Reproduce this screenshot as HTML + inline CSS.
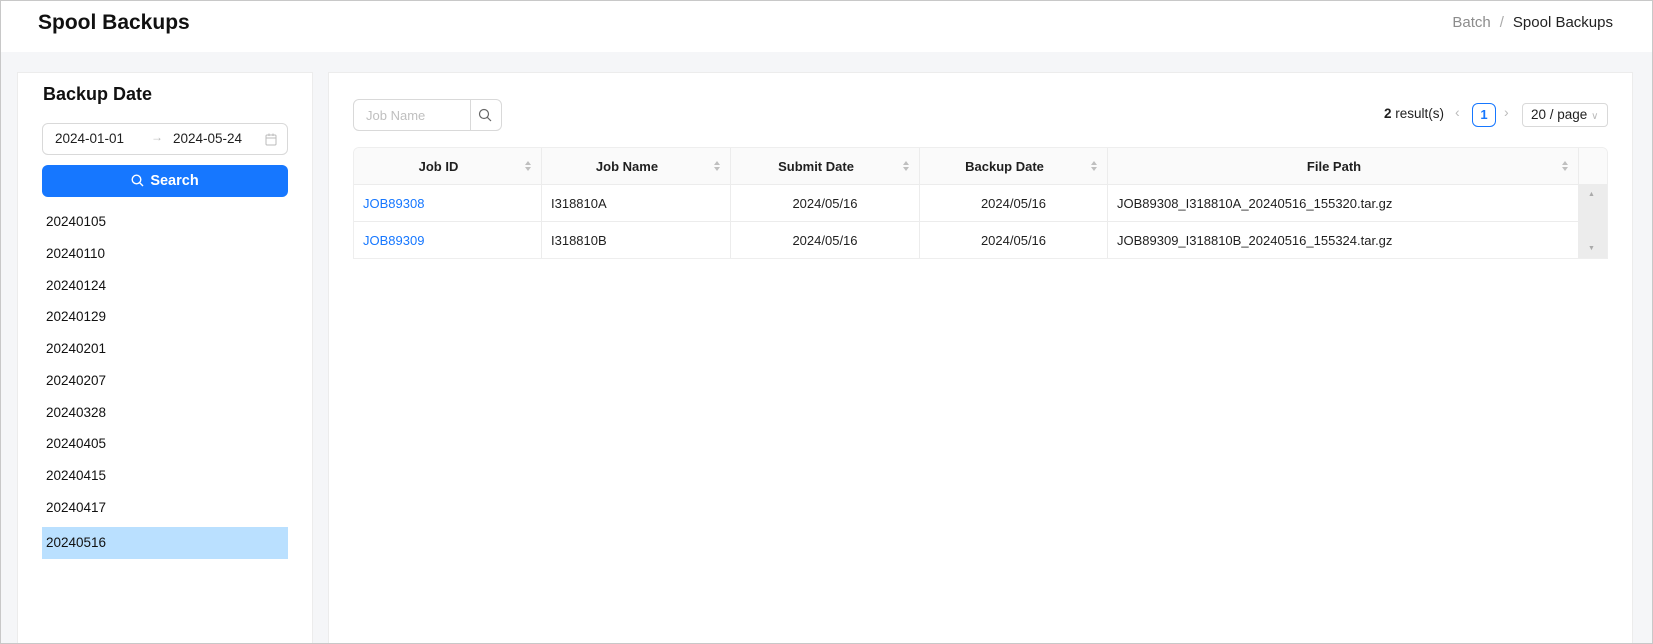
<!DOCTYPE html>
<html><head><meta charset="utf-8"><style>
*{box-sizing:border-box;margin:0;padding:0}
html,body{width:1653px;height:644px;overflow:hidden}
body{font-family:"Liberation Sans",sans-serif;color:#1f1f1f;background:#f5f6f8;position:relative;font-size:13px}
.frame{position:absolute;left:0;top:0;width:1653px;height:644px;border:1px solid #c8c8c8;pointer-events:none;z-index:9}
.hdr{position:absolute;left:0;top:0;width:1653px;height:52px;background:#fff}
.abs{position:absolute}
.card{position:absolute;background:#fff;border:1px solid #ececec;border-bottom:none}
.li{position:absolute;left:42px;width:246px;height:32px;line-height:32px;padding-left:4px;font-size:13.5px;color:#111}
.tbl{position:absolute;left:353px;top:147px;width:1255px;border:1px solid #eee;border-radius:6px 6px 0 0;overflow:hidden}
.row{position:absolute;left:0;width:100%;border-bottom:1px solid #ececec}
.c{position:absolute;top:0;height:100%;border-right:1px solid #ececec;display:flex;align-items:center}
.sort{position:absolute;right:9px;top:50%;margin-top:-6px;width:8px;height:12px}
</style></head><body>
<div class="hdr"></div>
<div class="abs" style="left:38px;top:11px;font-size:21px;font-weight:bold;color:#111">Spool Backups</div>
<div class="abs" style="right:40px;top:14px;font-size:15px"><span style="color:#8c8c8c">Batch</span><span style="color:#aaa;margin:0 9px">/</span><span style="color:#222">Spool Backups</span></div>

<div class="card" style="left:17px;top:72px;width:296px;height:572px"></div>
<div class="abs" style="left:43px;top:84px;font-size:18px;font-weight:bold;color:#111">Backup Date</div>
<div class="abs" style="left:42px;top:123px;width:246px;height:32px;border:1px solid #d9d9d9;border-radius:6px;font-size:13.5px">
 <span class="abs" style="left:12px;top:7px">2024-01-01</span>
 <span class="abs" style="left:108px;top:6px;color:#bbb;font-size:12px">→</span>
 <span class="abs" style="left:130px;top:7px">2024-05-24</span>
 <svg class="abs" style="left:222px;top:9px" width="12" height="13" viewBox="0 0 12 13"><rect x="1" y="2" width="10" height="10" rx="1" fill="none" stroke="#bbb"/><line x1="1" y1="5" x2="11" y2="5" stroke="#bbb"/><line x1="4" y1="0.5" x2="4" y2="3" stroke="#bbb"/><line x1="8" y1="0.5" x2="8" y2="3" stroke="#bbb"/></svg>
</div>
<div class="abs" style="left:42px;top:165px;width:246px;height:32px;background:#1677ff;border-radius:6px;color:#fff;font-size:14.5px;font-weight:bold;text-align:center;line-height:32px">
 <svg style="vertical-align:-2px;margin-right:6px" width="13" height="13" viewBox="0 0 13 13"><circle cx="5.5" cy="5.5" r="4.3" fill="none" stroke="#fff" stroke-width="1.4"/><line x1="8.6" y1="8.6" x2="12" y2="12" stroke="#fff" stroke-width="1.4"/></svg>Search</div>
<div class="li" style="top:206px">20240105</div>
<div class="li" style="top:238px">20240110</div>
<div class="li" style="top:270px">20240124</div>
<div class="li" style="top:301px">20240129</div>
<div class="li" style="top:333px">20240201</div>
<div class="li" style="top:365px">20240207</div>
<div class="li" style="top:397px">20240328</div>
<div class="li" style="top:428px">20240405</div>
<div class="li" style="top:460px">20240415</div>
<div class="li" style="top:492px">20240417</div>
<div class="li" style="top:527px;background:#bae0ff">20240516</div>

<div class="card" style="left:328px;top:72px;width:1305px;height:572px"></div>
<div class="abs" style="left:353px;top:99px;width:149px;height:32px;border:1px solid #d9d9d9;border-radius:6px">
 <span class="abs" style="left:12px;top:8px;color:#bfbfbf;font-size:13px">Job Name</span>
 <div class="abs" style="left:116px;top:0;width:1px;height:30px;background:#d9d9d9"></div>
 <svg class="abs" style="left:124px;top:8px" width="14" height="14" viewBox="0 0 14 14"><circle cx="6" cy="6" r="4.5" fill="none" stroke="#666" stroke-width="1.2"/><line x1="9.3" y1="9.3" x2="13" y2="13" stroke="#666" stroke-width="1.2"/></svg>
</div>
<div class="abs" style="left:1384px;top:106px;font-size:13.5px"><b>2</b> result(s)</div>
<div class="abs" style="left:1455px;top:104px;color:#bbb;font-size:14px">‹</div>
<div class="abs" style="left:1472px;top:103px;width:24px;height:24px;border:1px solid #1677ff;border-radius:6px;color:#1677ff;font-weight:bold;text-align:center;line-height:22px;font-size:13px">1</div>
<div class="abs" style="left:1504px;top:104px;color:#bbb;font-size:14px">›</div>
<div class="abs" style="left:1522px;top:103px;width:86px;height:24px;border:1px solid #d9d9d9;border-radius:4px;font-size:13.5px;line-height:22px;padding-left:8px">20 / page <span style="color:#bbb;font-size:10px">∨</span></div>

<div class="tbl" style="height:112px">
 <div class="row" style="top:0;height:37px;background:#fafafa;font-weight:bold">
  <div class="c" style="left:0;width:188px;justify-content:center;padding-right:18px">Job ID<svg class="sort" viewBox="0 0 8 12"><path d="M4 1L7 5H1z M4 11L7 7H1z" fill="#bfbfbf"/></svg></div>
  <div class="c" style="left:188px;width:189px;justify-content:center;padding-right:18px">Job Name<svg class="sort" viewBox="0 0 8 12"><path d="M4 1L7 5H1z M4 11L7 7H1z" fill="#bfbfbf"/></svg></div>
  <div class="c" style="left:377px;width:189px;justify-content:center;padding-right:18px">Submit Date<svg class="sort" viewBox="0 0 8 12"><path d="M4 1L7 5H1z M4 11L7 7H1z" fill="#bfbfbf"/></svg></div>
  <div class="c" style="left:566px;width:188px;justify-content:center;padding-right:18px">Backup Date<svg class="sort" viewBox="0 0 8 12"><path d="M4 1L7 5H1z M4 11L7 7H1z" fill="#bfbfbf"/></svg></div>
  <div class="c" style="left:754px;width:471px;justify-content:center;padding-right:18px">File Path<svg class="sort" viewBox="0 0 8 12"><path d="M4 1L7 5H1z M4 11L7 7H1z" fill="#bfbfbf"/></svg></div>
 </div>
 <div class="row" style="top:37px;height:37px">
  <div class="c" style="left:0;width:188px;padding-left:9px;color:#1677ff">JOB89308</div>
  <div class="c" style="left:188px;width:189px;padding-left:9px">I318810A</div>
  <div class="c" style="left:377px;width:189px;justify-content:center">2024/05/16</div>
  <div class="c" style="left:566px;width:188px;justify-content:center">2024/05/16</div>
  <div class="c" style="left:754px;width:471px;padding-left:9px">JOB89308_I318810A_20240516_155320.tar.gz</div>
 </div>
 <div class="row" style="top:74px;height:37px">
  <div class="c" style="left:0;width:188px;padding-left:9px;color:#1677ff">JOB89309</div>
  <div class="c" style="left:188px;width:189px;padding-left:9px">I318810B</div>
  <div class="c" style="left:377px;width:189px;justify-content:center">2024/05/16</div>
  <div class="c" style="left:566px;width:188px;justify-content:center">2024/05/16</div>
  <div class="c" style="left:754px;width:471px;padding-left:9px">JOB89309_I318810B_20240516_155324.tar.gz</div>
 </div>
 <div class="abs" style="left:1225px;top:37px;width:30px;height:75px;background:#ececec">
  <div class="abs" style="left:9px;top:6px;font-size:7px;color:#aaa">▲</div>
  <div class="abs" style="left:9px;top:60px;font-size:7px;color:#aaa">▼</div>
 </div>
</div>
<div class="frame"></div>
</body></html>
